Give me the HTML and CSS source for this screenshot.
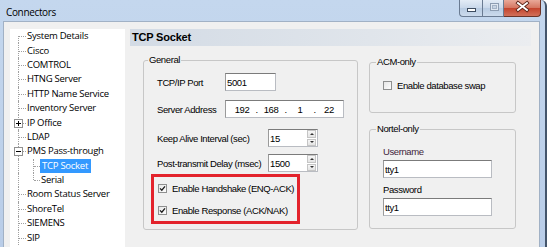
FILE: index.html
```html
<!DOCTYPE html>
<html lang="en">
<head>
  <meta charset="UTF-8" />
  <title>Connectors</title>
  <link rel="stylesheet" href="styles.css">
</head>
<body>

<div class="window">
  <div class="titlebar">
    <span class="title">Connectors</span>
    <div class="caption-buttons">
      <span class="cap cap-min">
        <svg width="23" height="17" viewBox="0 0 23 17"><rect x="7.5" y="9.5" width="8" height="3" fill="#fff" stroke="#3d4c60"/></svg>
      </span>
      <span class="cap cap-max">
        <svg width="22" height="17" viewBox="0 0 22 17"><rect x="7.5" y="4.5" width="8" height="7" fill="#dfe7f1" stroke="#8d9db2"/><rect x="9.5" y="6.5" width="4" height="3" fill="#c7d4e4" stroke="#a4b3c6"/></svg>
      </span>
      <span class="cap cap-close">
        <svg width="37" height="17" viewBox="0 0 37 17"><path d="M14 4 L23 11 M23 4 L14 11" stroke="#5a2318" stroke-width="3.6" stroke-linecap="square"/><path d="M14 4 L23 11 M23 4 L14 11" stroke="#fff" stroke-width="1.9" stroke-linecap="square"/></svg>
      </span>
    </div>
  </div>

  <div class="client">
    <ul class="tree">
      <li class="node"><span class="twig first"></span><span class="label">System Details</span></li>
      <li class="node"><span class="twig"></span><span class="label">Cisco</span></li>
      <li class="node"><span class="twig"></span><span class="label">COMTROL</span></li>
      <li class="node"><span class="twig"></span><span class="label">HTNG Server</span></li>
      <li class="node"><span class="twig"></span><span class="label">HTTP Name Service</span></li>
      <li class="node"><span class="twig"></span><span class="label">Inventory Server</span></li>
      <li class="node"><span class="twig"><span class="expander">
        <svg width="7" height="7" viewBox="0 0 7 7"><path d="M1 3.5 H6 M3.5 1 V6" stroke="#000"/></svg>
      </span></span><span class="label">IP Office</span></li>
      <li class="node"><span class="twig"></span><span class="label">LDAP</span></li>
      <li class="node"><span class="twig"><span class="expander">
        <svg width="7" height="7" viewBox="0 0 7 7"><path d="M1 3.5 H6" stroke="#000"/></svg>
      </span></span><span class="label">PMS Pass-through</span></li>
      <li class="node"><span class="twig pass"></span><span class="twig sub"></span><span class="label selected">TCP Socket</span></li>
      <li class="node"><span class="twig pass"></span><span class="twig sub last"></span><span class="label">Serial</span></li>
      <li class="node"><span class="twig"></span><span class="label">Room Status Server</span></li>
      <li class="node"><span class="twig"></span><span class="label">ShoreTel</span></li>
      <li class="node"><span class="twig"></span><span class="label">SIEMENS</span></li>
      <li class="node"><span class="twig"></span><span class="label">SIP</span></li>
    </ul>

    <div class="panel">
      <div class="panel-header">TCP Socket</div>

      <div class="panel-body">
        <fieldset class="group group-general">
          <legend>General</legend>

          <div class="field field-port">
            <label for="port">TCP/IP Port</label>
            <input type="text" id="port" class="textbox w-port" value="5001">
          </div>

          <div class="field field-address">
            <label>Server Address</label>
            <div class="ipbox">
              <span class="octet">192</span><span class="dot">.</span>
              <span class="octet">168</span><span class="dot">.</span>
              <span class="octet">1</span><span class="dot">.</span>
              <span class="octet">22</span>
            </div>
          </div>

          <div class="field field-keepalive wide">
            <label for="keepalive">Keep Alive Interval (sec)</label>
            <div class="spin">
              <input type="text" id="keepalive" value="15">
              <span class="spin-buttons"><span class="spin-up"></span><span class="spin-down"></span></span>
            </div>
          </div>

          <div class="field field-delay wide">
            <label for="delay">Post-transmit Delay (msec)</label>
            <div class="spin">
              <input type="text" id="delay" value="1500">
              <span class="spin-buttons"><span class="spin-up"></span><span class="spin-down"></span></span>
            </div>
          </div>

          <div class="callout">
            <div class="check-row">
              <span class="check on"><svg width="7" height="7" viewBox="0 0 7 7"><path d="M1 3.4 L2.8 5.2 L6 1.4" stroke="#1a1a1a" stroke-width="1.3" fill="none"/></svg></span>
              Enable Handshake (ENQ-ACK)
            </div>
            <div class="check-row">
              <span class="check on"><svg width="7" height="7" viewBox="0 0 7 7"><path d="M1 3.4 L2.8 5.2 L6 1.4" stroke="#1a1a1a" stroke-width="1.3" fill="none"/></svg></span>
              Enable Response (ACK/NAK)
            </div>
          </div>
        </fieldset>

        <div class="side">
          <fieldset class="group group-acm">
            <legend>ACM-only</legend>
            <div class="check-row">
              <span class="check"></span>
              Enable database swap
            </div>
          </fieldset>

          <fieldset class="group group-nortel">
            <legend>Nortel-only</legend>
            <label class="stacked user" for="username">Username</label>
            <input type="text" id="username" class="textbox w-cred" value="tty1">
            <label class="stacked pass-label" for="password">Password</label>
            <input type="text" id="password" class="textbox w-cred" value="tty1">
          </fieldset>
        </div>
      </div>
    </div>
  </div>
</div>

</body>
</html>
```

FILE: styles.css
```css
body {
  margin: 0;
  width: 547px;
  height: 247px;
  overflow: hidden;
  background: #fff;
  font-family: "Liberation Sans", Arial, sans-serif;
  font-size: 9.5px;
  letter-spacing: -0.4px;
  color: #000;
}

.window {
  height: 247px;
  box-sizing: border-box;
  display: flex;
  flex-direction: column;
  padding: 0 5px 0 3px;
  background: linear-gradient(#c4d7ee, #b9cde8);
  border-right: 2px solid #44556b;
  border-top-right-radius: 6px;
}

/* title bar */

.titlebar {
  height: 21px;
  display: flex;
  align-items: flex-start;
}

.title {
  margin: 5px 0 0 3px;
  font-family: "Open Sans", sans-serif;
  font-size: 10px;
  line-height: 14px;
  letter-spacing: -0.35px;
}

.caption-buttons {
  margin-left: auto;
  display: flex;
  margin-right: -1px;
}

.cap {
  display: block;
  height: 17px;
  box-sizing: border-box;
  border: 1px solid #6a7b92;
  border-top: 0;
}

.cap svg {
  display: block;
  margin-top: -1px;
}

.cap-min {
  width: 23px;
  border-right: 0;
  border-bottom-left-radius: 4px;
  background: linear-gradient(#e3ecf6, #c9d8ea 50%, #b8cbe2 51%, #cbdaec);
}

.cap-max {
  width: 22px;
  background: linear-gradient(#e3ecf6, #c9d8ea 50%, #b8cbe2 51%, #cbdaec);
}

.cap-close {
  width: 37px;
  border-left: 0;
  border-color: #6b3327;
  border-bottom-right-radius: 4px;
  background: linear-gradient(#e9a999, #d47560 50%, #c4432c 51%, #d1705a);
}

/* client area */

.client {
  flex: 1;
  display: flex;
  gap: 5px;
  padding: 7px 8px 0 6px;
  background: #f0f0f0;
  border: 1px solid #a1b1c5;
  border-bottom: 0;
  min-height: 0;
}

/* tree */

.tree {
  width: 115px;
  margin: 0;
  padding: 0;
  list-style: none;
  background: #fff;
  font-family: "Open Sans", sans-serif;
  font-size: 9.5px;
  letter-spacing: -0.25px;
}

.node {
  display: flex;
  align-items: center;
  height: 14.4px;
  white-space: nowrap;
}

.twig {
  position: relative;
  flex: none;
  width: 16px;
  align-self: stretch;
}

.twig::before {
  content: "";
  position: absolute;
  left: 8px;
  top: 0;
  bottom: 0;
  border-left: 1px dotted #a0a0a0;
}

.twig::after {
  content: "";
  position: absolute;
  left: 9px;
  right: 0;
  top: 50%;
  border-top: 1px dotted #a0a0a0;
}

.twig.first::before {
  top: 50%;
}

.twig.pass::after {
  display: none;
}

.twig.sub {
  width: 14px;
}

.twig.sub::before {
  left: 7px;
}

.twig.sub::after {
  left: 8px;
}

.twig.last::before {
  bottom: 50%;
}

.expander {
  position: absolute;
  left: 4px;
  top: 50%;
  margin-top: -4px;
  width: 9px;
  height: 9px;
  box-sizing: border-box;
  border: 1px solid #919191;
  background: #fff;
  z-index: 1;
}

.expander svg {
  display: block;
}

.label {
  padding: 0 2px 0 1px;
  line-height: 14px;
}

.label.selected {
  padding: 0 3px 0 2px;
  background: #3399ff;
  color: #fff;
}

/* right panel */

.panel {
  flex: 1;
  display: flex;
  flex-direction: column;
}

.panel-header {
  height: 17px;
  padding-left: 2px;
  line-height: 17px;
  font-weight: bold;
  font-size: 11px;
  letter-spacing: -0.2px;
  background: linear-gradient(to right, #d3dbe5, #e0e5eb 60%, #ebedf0);
}

.panel-body {
  display: flex;
  align-items: flex-start;
  gap: 11px;
  padding: 8px 0 0 13px;
}

.group {
  margin: 0;
  border: 1px solid #c7c7c7;
  border-radius: 3px;
  min-width: 0;
}

.group legend {
  padding: 0 1px;
  line-height: 12px;
}

.group-general {
  width: 215px;
  box-sizing: border-box;
  padding: 7px 13px 5px 13px;
}

.group-general legend {
  margin-left: -9px;
}

.field {
  display: flex;
  align-items: center;
  height: 18px;
}

.field label {
  width: 68px;
  flex: none;
}

.field.wide label {
  width: 111px;
}

.field-address {
  margin-top: 9px;
}

.field-keepalive {
  margin-top: 11px;
}

.field-delay {
  margin-top: 7px;
}

.textbox,
.ipbox,
.spin {
  box-sizing: border-box;
  height: 18px;
  margin: 0;
  border: 1px solid #b9bcc2;
  border-top-color: #7b7b7b;
  border-left-color: #9a9a9a;
  background: #fff;
}

.textbox {
  padding: 0 1px;
  font: inherit;
  letter-spacing: inherit;
  color: #000;
  outline: none;
}

.w-port {
  width: 51px;
}

.w-cred {
  display: block;
  width: 109px;
}

.ipbox {
  width: 120px;
  display: flex;
  align-items: center;
  padding-left: 6px;
}

.octet {
  width: 20px;
  text-align: center;
}

.dot {
  width: 9px;
  text-align: center;
}

.spin {
  width: 50px;
  display: flex;
}

.spin input {
  width: 36px;
  flex: none;
  border: 0;
  padding: 0 1px;
  margin: 0;
  font: inherit;
  letter-spacing: inherit;
  outline: none;
}

.spin-buttons {
  flex: 1;
  display: flex;
  flex-direction: column;
  gap: 1px;
  padding: 0 1px 0 0;
}

.spin-up,
.spin-down {
  flex: 1;
  display: flex;
  align-items: center;
  justify-content: center;
  border: 1px solid #c5c5c5;
  background: linear-gradient(#f6f6f6, #e4e4e4);
}

.spin-up::after,
.spin-down::after {
  content: "";
  width: 0;
  height: 0;
  border-left: 2px solid transparent;
  border-right: 2px solid transparent;
}

.spin-up::after {
  border-bottom: 2px solid #333;
}

.spin-down::after {
  border-top: 2px solid #333;
}

.callout {
  box-sizing: border-box;
  width: 149px;
  margin: 2px 0 0 -6px;
  padding-left: 4px;
  border: 3px solid #e3232c;
}

.check-row {
  display: flex;
  align-items: center;
  height: 22px;
  gap: 5px;
  white-space: nowrap;
}

.check {
  flex: none;
  width: 9px;
  height: 9px;
  box-sizing: border-box;
  border: 1px solid #8e8f8f;
  background: linear-gradient(135deg, #e6e6e6, #fdfdfd);
}

.check svg {
  display: block;
}

/* right column */

.side {
  width: 147px;
  margin-top: 2px;
  display: flex;
  flex-direction: column;
}

.group-acm {
  padding: 6px 13px 16px 13px;
}

.group-acm legend,
.group-nortel legend {
  margin-left: -7px;
}

.group-nortel {
  margin-top: 10px;
  padding: 11px 13px 12px 13px;
}

.stacked {
  display: block;
  line-height: 12px;
  margin-bottom: 2px;
}

.stacked.user {
  color: #3f1f3b;
}

.stacked.pass-label {
  margin-top: 6px;
}
```
